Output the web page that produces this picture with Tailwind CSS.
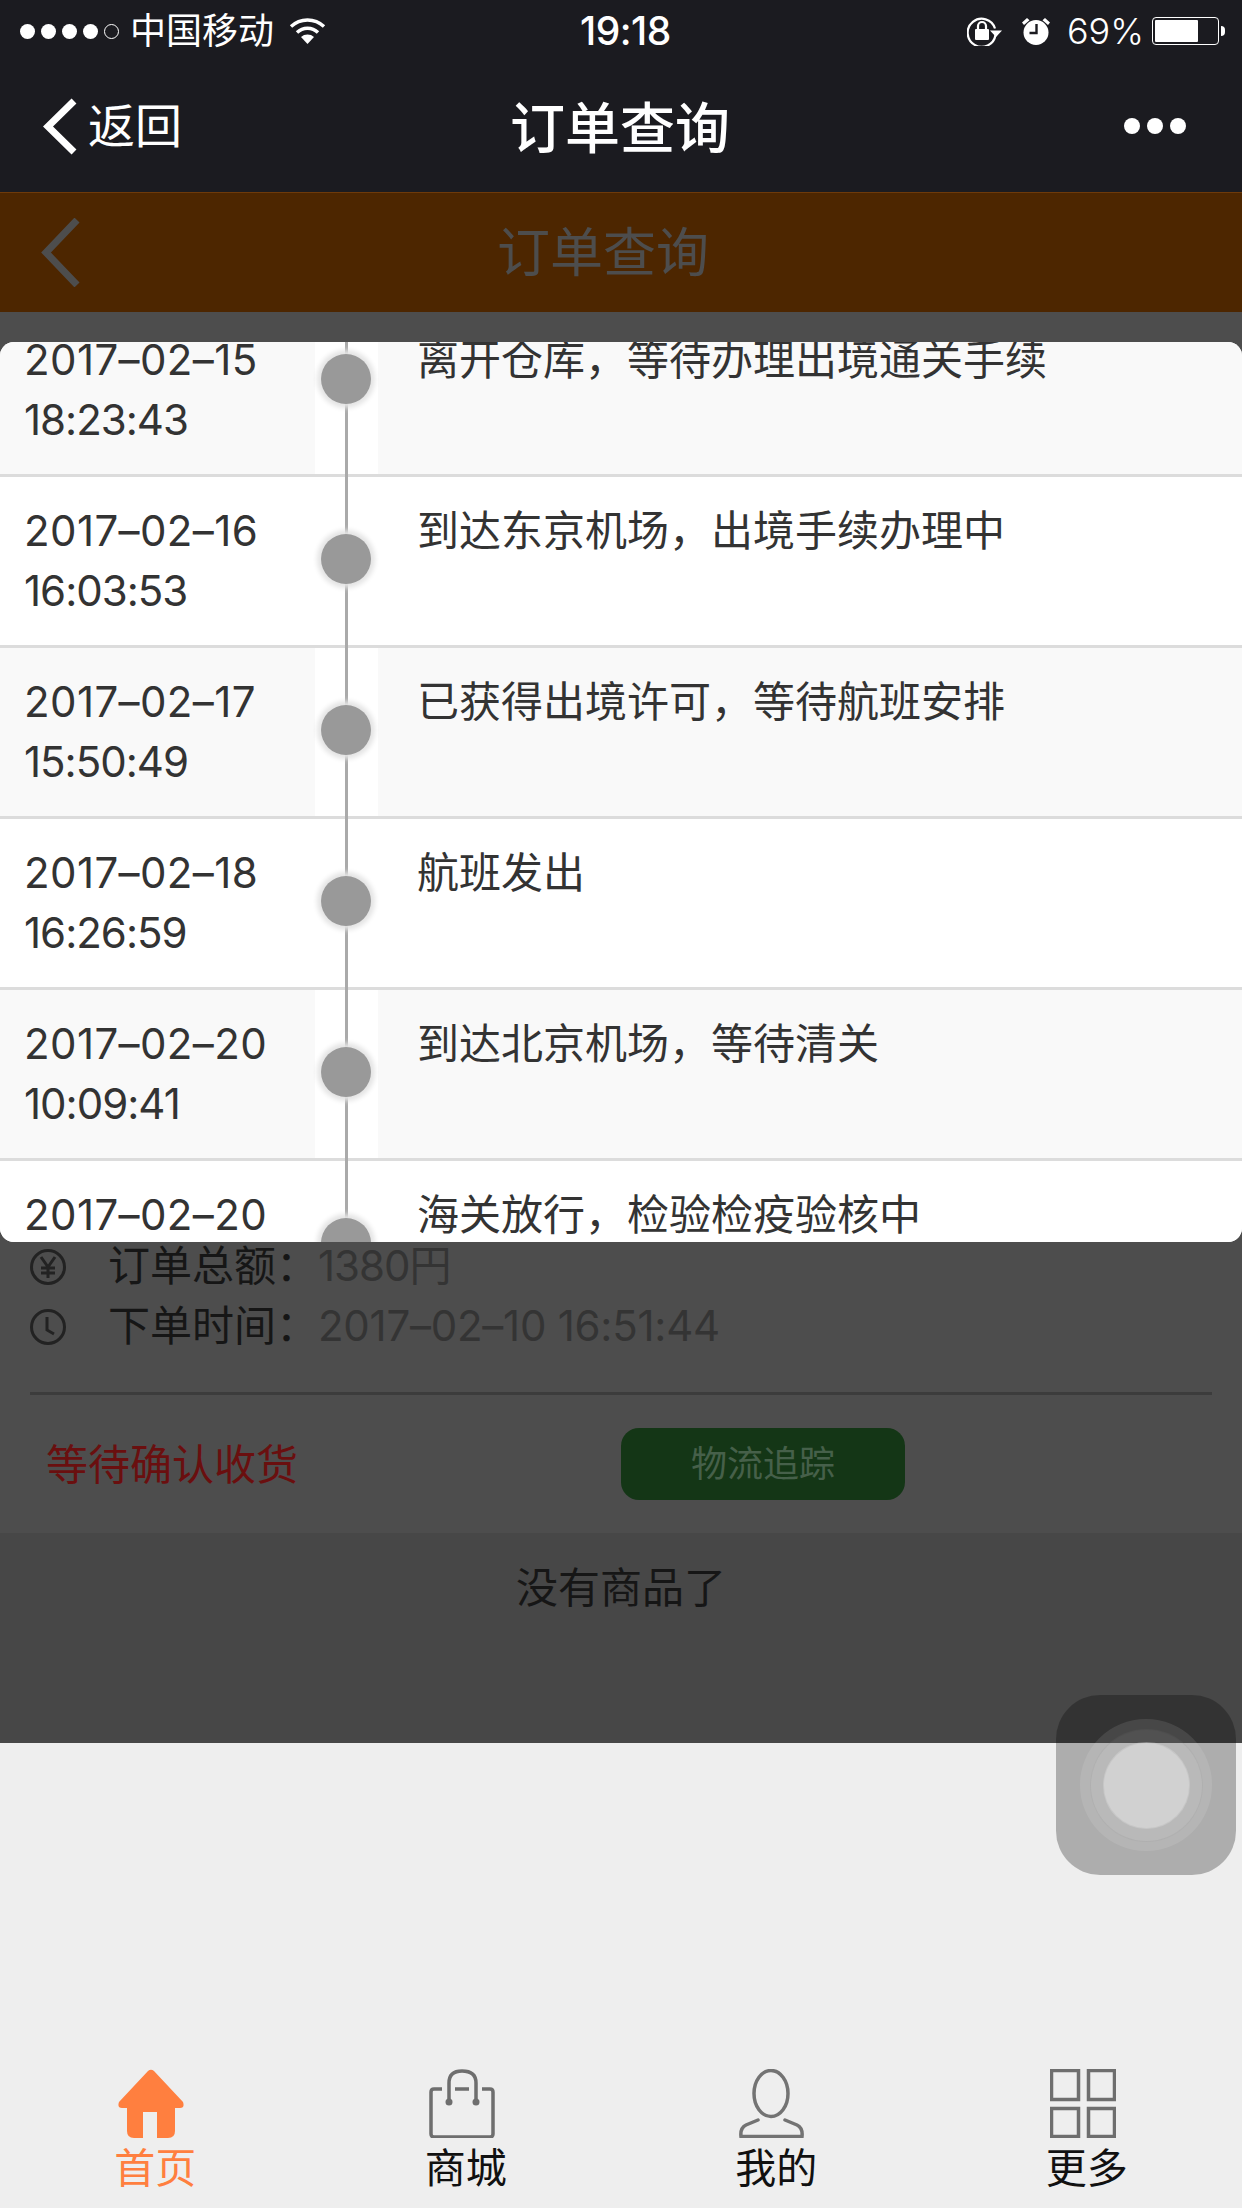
<!DOCTYPE html>
<html lang="zh-CN">
<head>
    <meta charset="UTF-8">
    <meta name="viewport" content="width=device-width, initial-scale=1.0">
    <title>订单查询</title>
    <script src="https://cdn.jsdelivr.net/npm/@tailwindcss/browser@4"></script>
</head>
<body class="bg-[#eeeeee]">
<div class="relative flex flex-col w-[1242px] h-[2208px] overflow-hidden bg-[#eeeeee] font-['Inter','Noto_Sans_CJK_SC',sans-serif]">

    <!-- status bar + wechat nav -->
    <div class="h-[192px] bg-[#1b1b20] text-white">
        <div class="grid grid-cols-[560px_1fr_auto] items-center h-[60px] pl-[20px] pr-[17px]">
            <div class="flex items-center">
                <div class="flex gap-[6px]">
                    <span class="size-[15px] rounded-full bg-white"></span>
                    <span class="size-[15px] rounded-full bg-white"></span>
                    <span class="size-[15px] rounded-full bg-white"></span>
                    <span class="size-[15px] rounded-full bg-white"></span>
                    <span class="size-[15px] rounded-full border border-white"></span>
                </div>
                <span class="ml-[11px] text-[36px] leading-[60px]">中国移动</span>
                <svg class="ml-[15px]" width="37" height="26" viewBox="0 0 37 26" fill="none" stroke="#fff" stroke-width="3.4">
                    <path d="M2 8.5A24 24 0 0 1 35 8.5"/>
                    <path d="M8 14.5A15 15 0 0 1 29 14.5"/>
                    <path d="M18.5 26L12 19A10 10 0 0 1 25 19Z" fill="#fff" stroke="none"/>
                </svg>
            </div>
            <span class="text-[39px] leading-[62px] font-medium tracking-[-0.5px]">19:18</span>
            <div class="flex items-center">
                <svg width="35" height="30" viewBox="0 0 35 30" fill="none">
                    <path d="M28 12.5A14 14 0 1 0 28.5 19" stroke="#fff" stroke-width="2.2"/>
                    <path d="M23 14.5H35L29 21Z" fill="#fff"/>
                    <rect x="8" y="13" width="14" height="11" rx="1" fill="#fff"/>
                    <path d="M11 13V10A4 4 0 0 1 19 10V13" stroke="#fff" stroke-width="2.2"/>
                </svg>
                <svg class="ml-[19px]" width="30" height="28" viewBox="0 0 30 28">
                    <circle cx="15" cy="15.5" r="12.5" fill="#fff"/>
                    <path d="M1 5.5L6 1L8.5 3.2L3 8ZM29 5.5L24 1L21.5 3.2L27 8Z" fill="#fff"/>
                    <path d="M15.5 7V16H8.5" fill="none" stroke="#1b1b20" stroke-width="2.4"/>
                </svg>
                <span class="ml-[16px] text-[36px] leading-[60px] font-light">69%</span>
                <div class="ml-[8px] w-[67px] h-[28px] rounded-[4px] border border-white p-[2px]">
                    <div class="w-[43px] h-full bg-white rounded-[1px]"></div>
                </div>
                <span class="ml-[2px] w-[4px] h-[10px] bg-white rounded-r-full"></span>
            </div>
        </div>
        <div class="grid grid-cols-[510px_1fr_auto] items-center h-[132px] pr-[56px]">
            <div class="flex items-center pl-[43px]">
                <svg width="34" height="57" viewBox="0 0 34 57" fill="none" stroke="#fff" stroke-width="7">
                    <path d="M31 3L5 28.5L31 54"/>
                </svg>
                <span class="ml-[11px] text-[47px] leading-[60px]">返回</span>
            </div>
            <span class="pt-[3px] text-[55px] leading-[60px] font-medium">订单查询</span>
            <div class="flex gap-[7px]">
                <span class="size-[16px] rounded-full bg-white"></span>
                <span class="size-[16px] rounded-full bg-white"></span>
                <span class="size-[16px] rounded-full bg-white"></span>
            </div>
        </div>
    </div>

    <!-- page header, dimmed by the dialog -->
    <div class="flex items-center h-[120px] pl-[41px] bg-[#4d2600] border-t border-[#6e3a0a]">
        <svg width="39" height="69" viewBox="0 0 39 69" fill="none" stroke="#4d4d4d" stroke-width="7">
            <path d="M36 2L5 34.5L36 67"/>
        </svg>
        <span class="ml-[417px] text-[53px] leading-[60px] text-[#4d4d4d]">订单查询</span>
    </div>

    <!-- order summary, dimmed -->
    <div class="h-[1221px] pt-[923px] bg-[#4d4d4d]">
        <div class="flex items-center h-[60px] pl-[30px] text-[42px]">
            <svg class="mt-[4px]" width="36" height="36" viewBox="0 0 36 36" fill="none" stroke="#222" stroke-width="3">
                <circle cx="18" cy="18" r="16.5"/>
                <path d="M11 8L18 18L25 8M18 18V29M11 19H25M11 24H25"/>
            </svg>
            <span class="ml-[42px] w-[210px] text-[#161616]">订单总额&#xFF1A;</span>
            <span class="tracking-[-1px] text-[#343434]">1380円</span>
        </div>
        <div class="flex items-center h-[60px] pl-[30px] text-[42px]">
            <svg class="mt-[4px]" width="36" height="36" viewBox="0 0 36 36" fill="none" stroke="#222" stroke-width="3">
                <circle cx="18" cy="18" r="16.5"/>
                <path d="M17 8V21L24 25"/>
            </svg>
            <span class="ml-[42px] w-[210px] text-[#161616]">下单时间&#xFF1A;</span>
            <span class="tracking-[-0.25px] text-[#343434]">2017–02–10 16:51:44</span>
        </div>
        <div class="mx-[30px] mt-[37px] h-[3px] bg-[#3c3c3c]"></div>
        <div class="flex items-center mt-[33px] pl-[46px]">
            <span class="w-[575px] text-[42px] text-[#6a0f0f]">等待确认收货</span>
            <div class="flex items-center justify-center w-[284px] h-[72px] rounded-[18px] bg-[#143616] text-[36px] text-[#46604a]">物流追踪</div>
        </div>
    </div>
    <div class="h-[210px] pt-[25px] bg-[#474747] text-center text-[42px] leading-[60px] text-[#161616]">没有商品了</div>

    <!-- tab bar -->
    <div class="grid grid-cols-4 mt-auto pb-[16px] text-[41px] leading-[48px] text-[#111111]">
        <div class="flex flex-col items-center">
            <svg class="mr-[8px]" width="66" height="69" viewBox="0 0 66 69" fill="#ff7f3f">
                <path d="M30 2Q33-.5 36 2L65 33Q67 39 62 39H57V62Q57 69 50 69H39V43H25V69H16Q9 69 9 62V39H4Q-1 39 1 33Z"/>
            </svg>
            <span class="mt-[6px] text-[#ff7f3f]">首页</span>
        </div>
        <div class="flex flex-col items-center">
            <svg class="mr-[8px]" width="66" height="69" viewBox="0 0 66 69" fill="none" stroke="#6e6e6e" stroke-width="3.5">
                <path d="M13 20H5Q2 20 2 23V65Q2 68 5 68H61Q64 68 64 65V23Q64 20 61 20H53M26 20H40M20 33V14Q20 2 33 2Q47 2 47 14V33"/>
                <circle cx="20" cy="33" r="3.5" fill="#6e6e6e" stroke="none"/>
                <circle cx="47" cy="33" r="3.5" fill="#6e6e6e" stroke="none"/>
            </svg>
            <span class="mt-[6px]">商城</span>
        </div>
        <div class="flex flex-col items-center">
            <svg class="mr-[8px]" width="66" height="69" viewBox="0 0 66 69" fill="none" stroke="#737373" stroke-width="3.5">
                <ellipse cx="32" cy="24.5" rx="17" ry="23"/>
                <path d="M19 51L7 56Q1 59 2 67.5H63Q64 59 58 56L46 51" stroke-linecap="round"/>
            </svg>
            <span class="mt-[6px]">我的</span>
        </div>
        <div class="flex flex-col items-center">
            <svg class="mr-[8px]" width="66" height="69" viewBox="0 0 66 69" fill="none" stroke="#6e6e6e" stroke-width="3.5">
                <rect x="1.5" y="1.5" width="27" height="29"/>
                <rect x="38.5" y="1.5" width="26" height="29"/>
                <rect x="1.5" y="39.5" width="27" height="28"/>
                <rect x="38.5" y="39.5" width="26" height="28"/>
            </svg>
            <span class="mt-[6px]">更多</span>
        </div>
    </div>

    <!-- logistics dialog, scrolled -->
    <div class="absolute left-0 top-[342px] w-full h-[900px] overflow-hidden rounded-[14px] bg-white text-[42px] leading-[60px] text-[#333333]">
        <div class="-mt-[36px]">
            <div class="flex h-[171px] border-b-[3px] border-[#dcdcdc]">
                <div class="w-[315px] pl-[24px] pt-[24px] tracking-[-1px] bg-[#f9f9f9]"><div class="tracking-[0.4px]">2017–02–15</div>18:23:43</div>
                <div class="relative w-[63px] bg-white">
                    <span class="absolute left-[30px] top-0 -bottom-[3px] w-[3px] bg-[#aaaaaa]"></span>
                    <span class="absolute left-[6px] top-[48px] size-[50px] rounded-full bg-[#999999] shadow-[0_0_5px_4px_#e4e4e4]"></span>
                </div>
                <div class="flex-1 pl-[39px] pt-[24px] bg-[#f9f9f9]">离开仓库&#xFF0C;等待办理出境通关手续</div>
            </div>
            <div class="flex h-[171px] border-b-[3px] border-[#dcdcdc]">
                <div class="w-[315px] pl-[24px] pt-[24px] tracking-[-1px] bg-white"><div class="tracking-[0.4px]">2017–02–16</div>16:03:53</div>
                <div class="relative w-[63px] bg-white">
                    <span class="absolute left-[30px] top-0 -bottom-[3px] w-[3px] bg-[#aaaaaa]"></span>
                    <span class="absolute left-[6px] top-[57px] size-[50px] rounded-full bg-[#999999] shadow-[0_0_5px_4px_#e4e4e4]"></span>
                </div>
                <div class="flex-1 pl-[39px] pt-[24px] bg-white">到达东京机场&#xFF0C;出境手续办理中</div>
            </div>
            <div class="flex h-[171px] border-b-[3px] border-[#dcdcdc]">
                <div class="w-[315px] pl-[24px] pt-[24px] tracking-[-1px] bg-[#f9f9f9]"><div class="tracking-[0.4px]">2017–02–17</div>15:50:49</div>
                <div class="relative w-[63px] bg-white">
                    <span class="absolute left-[30px] top-0 -bottom-[3px] w-[3px] bg-[#aaaaaa]"></span>
                    <span class="absolute left-[6px] top-[57px] size-[50px] rounded-full bg-[#999999] shadow-[0_0_5px_4px_#e4e4e4]"></span>
                </div>
                <div class="flex-1 pl-[39px] pt-[24px] bg-[#f9f9f9]">已获得出境许可&#xFF0C;等待航班安排</div>
            </div>
            <div class="flex h-[171px] border-b-[3px] border-[#dcdcdc]">
                <div class="w-[315px] pl-[24px] pt-[24px] tracking-[-1px] bg-white"><div class="tracking-[0.4px]">2017–02–18</div>16:26:59</div>
                <div class="relative w-[63px] bg-white">
                    <span class="absolute left-[30px] top-0 -bottom-[3px] w-[3px] bg-[#aaaaaa]"></span>
                    <span class="absolute left-[6px] top-[57px] size-[50px] rounded-full bg-[#999999] shadow-[0_0_5px_4px_#e4e4e4]"></span>
                </div>
                <div class="flex-1 pl-[39px] pt-[24px] bg-white">航班发出</div>
            </div>
            <div class="flex h-[171px] border-b-[3px] border-[#dcdcdc]">
                <div class="w-[315px] pl-[24px] pt-[24px] tracking-[-1px] bg-[#f9f9f9]"><div class="tracking-[0.4px]">2017–02–20</div>10:09:41</div>
                <div class="relative w-[63px] bg-white">
                    <span class="absolute left-[30px] top-0 -bottom-[3px] w-[3px] bg-[#aaaaaa]"></span>
                    <span class="absolute left-[6px] top-[57px] size-[50px] rounded-full bg-[#999999] shadow-[0_0_5px_4px_#e4e4e4]"></span>
                </div>
                <div class="flex-1 pl-[39px] pt-[24px] bg-[#f9f9f9]">到达北京机场&#xFF0C;等待清关</div>
            </div>
            <div class="flex h-[171px]">
                <div class="w-[315px] pl-[24px] pt-[24px] tracking-[0.4px] bg-white">2017–02–20</div>
                <div class="relative w-[63px] bg-white">
                    <span class="absolute left-[30px] top-0 bottom-0 w-[3px] bg-[#aaaaaa]"></span>
                    <span class="absolute left-[6px] top-[57px] size-[50px] rounded-full bg-[#999999] shadow-[0_0_5px_4px_#e4e4e4]"></span>
                </div>
                <div class="flex-1 pl-[39px] pt-[24px] bg-white">海关放行&#xFF0C;检验检疫验核中</div>
            </div>
        </div>
    </div>

    <!-- assistive touch -->
    <div class="absolute left-[1056px] top-[1695px] flex items-center justify-center size-[180px] rounded-[44px] bg-black/27">
        <div class="flex items-center justify-center size-[132px] rounded-full bg-white/10">
            <div class="flex items-center justify-center size-[113px] rounded-full bg-white/6 border border-black/5">
                <div class="size-[87px] rounded-full bg-white/35 border border-black/5"></div>
            </div>
        </div>
    </div>
</div>
</body>
</html>
